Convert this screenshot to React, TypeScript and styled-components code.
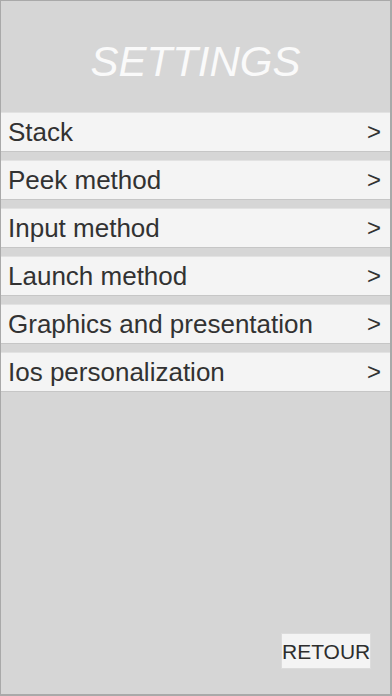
import styled, { createGlobalStyle } from "styled-components"

const GlobalStyle = createGlobalStyle`
  html, body {
    margin: 0;
    padding: 0;
  }
  body {
    font-family: "Liberation Sans", Arial, sans-serif;
  }
`

const Screen = styled.div`
  box-sizing: border-box;
  width: 392px;
  height: 696px;
  background: #d6d6d6;
  border: 1px solid #a9a9a9;
  border-right-width: 2px;
  border-bottom-width: 2px;
  display: flex;
  flex-direction: column;
`

const Header = styled.h1`
  margin: 0;
  height: 111px;
  display: flex;
  align-items: center;
  justify-content: center;
  color: #fafafa;
  font-size: 42px;
  font-style: italic;
  font-weight: 400;
  padding-top: 10px;
  box-sizing: border-box;
`

const Menu = styled.ul`
  list-style: none;
  margin: 0;
  padding: 0;
  display: flex;
  flex-direction: column;
  gap: 8px;
`

const Row = styled.li`
  box-sizing: border-box;
  height: 40px;
  background: #f4f4f4;
  border-top: 1px solid #e2e2e2;
  border-bottom: 1px solid #c6c6c6;
  display: flex;
  align-items: center;
  justify-content: space-between;
  padding: 0 9px 0 7px;
  color: #323232;
  font-size: 26px;
`

const Chevron = styled.span`
  font-size: 24px;
`

const Footer = styled.div`
  margin-top: auto;
  display: flex;
  justify-content: flex-end;
  padding: 0 19px 25px 0;
`

const BackButton = styled.button`
  box-sizing: border-box;
  width: 90px;
  height: 36px;
  background: #f4f4f4;
  border: 1px solid #dcdcdc;
  color: #2e2e2e;
  font-family: "Liberation Sans", Arial, sans-serif;
  font-size: 21px;
  padding: 2px 0 0;
`

const items = [
  "Stack",
  "Peek method",
  "Input method",
  "Launch method",
  "Graphics and presentation",
  "Ios personalization",
]

const App = () => {
  return (
    <>
      <GlobalStyle />
      <Screen>
        <Header>SETTINGS</Header>
        <Menu>
          {items.map((label) => (
            <Row key={label}>
              <span>{label}</span>
              <Chevron>&gt;</Chevron>
            </Row>
          ))}
        </Menu>
        <Footer>
          <BackButton>RETOUR</BackButton>
        </Footer>
      </Screen>
    </>
  )
}

export default App
